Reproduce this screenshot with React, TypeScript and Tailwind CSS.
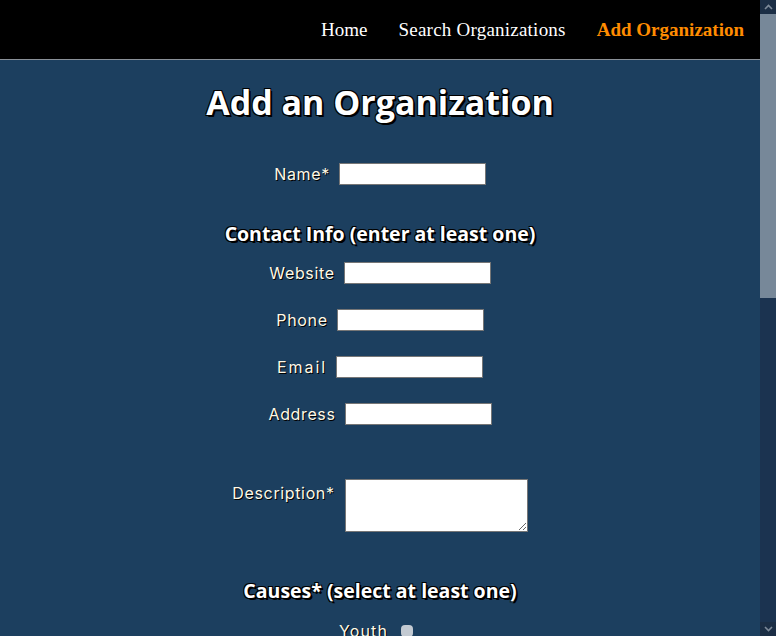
import React from "react";

const labelCls =
  "text-[16px] text-[#fff9e6] [font-family:Inter,'Noto_Sans',sans-serif] [text-shadow:1px_1px_0_#000]";
const headCls =
  "font-bold text-white [font-family:'Open_Sans','Noto_Sans',sans-serif] [text-shadow:2px_2px_0_#000,-1px_-1px_0_#000,1px_-1px_0_#000,-1px_1px_0_#000]";

function Field({ label, track = "tracking-[0.04em]" }: { label: string; track?: string }) {
  return (
    <div className="flex items-center justify-center gap-[9px] h-[22px]">
      <label className={`${labelCls} ${track}`}>{label}</label>
      <input
        type="text"
        className="w-[147px] h-[22px] bg-white border border-[#767676] outline-none"
      />
    </div>
  );
}

function Scrollbar() {
  return (
    <div className="w-4 shrink-0 flex flex-col bg-[#1b3350]">
      <div className="h-[14px] bg-[#1b2e45] flex items-center justify-center">
        <svg width="9" height="6" viewBox="0 0 9 6">
          <path d="M1 5 L4.5 1.5 L8 5" stroke="#7d8a99" strokeWidth="1.6" fill="none" />
        </svg>
      </div>
      <div className="h-[284px] bg-[#778899]" />
      <div className="flex-1" />
      <div className="h-[14px] bg-[#1b2e45] flex items-center justify-center">
        <svg width="9" height="6" viewBox="0 0 9 6">
          <path d="M1 1 L4.5 4.5 L8 1" stroke="#7d8a99" strokeWidth="1.6" fill="none" />
        </svg>
      </div>
    </div>
  );
}

const causes = ["Youth", "Education", "Health", "Environment", "Animals"];

export default function App() {
  return (
    <div className="h-[636px] flex overflow-hidden bg-[#1c3f5f]">
      <div className="flex-1 min-w-0 overflow-hidden">
        {/* Nav */}
        <header className="h-[60px] bg-black border-b border-[#8a9098] flex items-center justify-end gap-[31px] pr-4 pt-[2px] [font-family:'Liberation_Serif',serif] text-[19px]">
          <a className="text-white">Home</a>
          <a className="text-white tracking-[0.012em]">Search Organizations</a>
          <a className="text-[#ff8c00] font-bold">Add Organization</a>
        </header>

        <main className="flex flex-col items-center pb-10">
          <h1 className={`${headCls} text-[34px] leading-none mt-[25px]`}>Add an Organization</h1>

          <div className="mt-[44px]">
            <Field label="Name*" />
          </div>

          <h2 className={`${headCls} text-[19.5px] leading-none mt-[39px]`}>Contact Info (enter at least one)</h2>

          <div className="flex flex-col gap-[25px] mt-[18px]">
            <Field label="Website" />
            <Field label="Phone" />
            <Field label="Email" track="tracking-[0.12em]" />
            <Field label="Address" />
          </div>

          <div className="flex items-start justify-center gap-[10px] mt-[54px]">
            <label className={`${labelCls} tracking-[0.04em] mt-[2px]`}>Description*</label>
            <textarea className="w-[183px] h-[53px] bg-white border border-[#767676] outline-none resize-y" />
          </div>

          <h2 className={`${headCls} text-[19.5px] leading-none mt-[49px]`}>Causes* (select at least one)</h2>

          <div className="flex flex-col items-center gap-[14px] mt-[19px] pr-2">
            {causes.map((c) => (
              <div key={c} className="flex items-center gap-[13px]">
                <span className={`${labelCls} tracking-[0.07em]`}>{c}</span>
                <span className="w-3 h-3 rounded-sm bg-[#c3cad2]" />
              </div>
            ))}
          </div>
        </main>
      </div>
      <Scrollbar />
    </div>
  );
}
